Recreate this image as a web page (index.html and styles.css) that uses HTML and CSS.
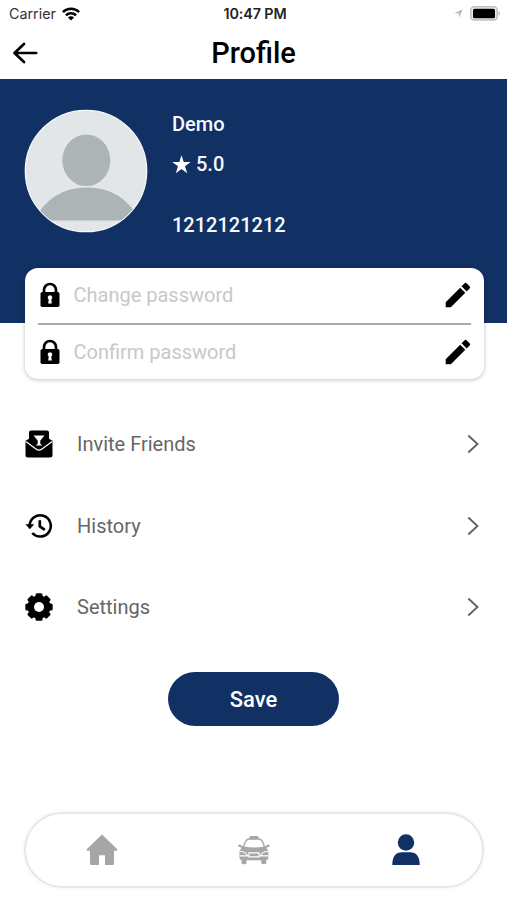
FILE: index.html
```html
<!DOCTYPE html>
<html lang="en">
<head>
<meta charset="utf-8">
<title>Profile</title>
<link rel="stylesheet" href="styles.css">
</head>
<body>
<svg width="0" height="0" class="defs" aria-hidden="true">
  <symbol id="lock" viewBox="0 0 20 26"><path d="M4 11V8a6 6 0 0 1 12 0v3" fill="none" stroke="#000" stroke-width="2.7"/><rect x=".5" y="10" width="19" height="15" rx="1.8"/><path fill="#fff" d="M10 13.2a2.3 2.3 0 0 1 1.3 4.2l.5 4.1H8.2l.5-4.1a2.3 2.3 0 0 1 1.3-4.2z"/></symbol>
  <symbol id="pencil" viewBox="0 0 26 26"><path d="M.7 20.2 15.2 5.7l5.1 5.1L5.8 25.3H.7zM16.6 4.3l2.8-2.9q1.2-1.1 2.4 0l2.8 2.8q1.1 1.2 0 2.4l-2.9 2.8z"/></symbol>
  <symbol id="chevron" viewBox="0 0 12 20"><path d="m1.3 1.5 9.2 8.5-9.2 8.5" fill="none" stroke="#606060" stroke-width="1.8"/></symbol>
</svg>
<div class="status">
  <div class="carrier"><span>Carrier</span>
    <svg width="18" height="14" viewBox="0 0 18 14"><g fill="none" stroke="#000" stroke-width="2.4"><path d="M.9 5.1a11.5 11.5 0 0 1 16.2 0"/><path d="M3.9 8.3a7.2 7.2 0 0 1 10.2 0"/></g><path d="M9 13.6 5.9 10.5a4.4 4.4 0 0 1 6.2 0z"/></svg>
  </div>
  <div class="time">10:47 PM</div>
  <div class="indicators">
    <svg width="9" height="9" viewBox="0 0 9 9"><path fill="#b5b5b5" d="M8.7.3 4.9 8.7V4.3H.3z"/></svg>
    <svg width="31" height="15" viewBox="0 0 31 15"><rect x=".8" y=".8" width="26.4" height="13.2" rx="3.5" fill="#eee" stroke="#bdbdbd" stroke-width="1.5"/><rect x="3" y="2.7" width="22" height="9.5" rx="1.5"/><path fill="#b5b5b5" d="M28.6 5q3 2.4 0 4.8z"/></svg>
  </div>
</div>
<header class="header">
  <svg width="26" height="22" viewBox="0 0 26 22"><path d="M12 2 2.5 11l9.5 9M2.8 11h21.4" fill="none" stroke="#000" stroke-width="2.7" stroke-linecap="round" stroke-linejoin="round"/></svg>
  <h1>Profile</h1>
</header>
<section class="hero">
  <svg class="avatar" width="124" height="124" viewBox="0 0 124 124"><defs><clipPath id="round"><circle cx="62" cy="62" r="60.5"/></clipPath></defs><circle cx="62" cy="62" r="60.7" fill="#e3e6e7" stroke="#f5f8fc" stroke-width="1.3"/><g clip-path="url(#round)" fill="#adb4b6"><ellipse cx="62.3" cy="51.3" rx="24" ry="25.8"/><path d="M10 111.5Q27 78.5 63 78.5T116 111.5z"/></g></svg>
  <div class="info">
    <div class="name">Demo</div>
    <div class="rating"><svg width="19" height="19" viewBox="0 0 19 19"><path fill="#fff" d="m9.5.3 2.2 6.8h7l-5.7 4.2 2.2 6.9-5.7-4.2-5.7 4.2L6 11.3.3 7.1h7z"/></svg><span>5.0</span></div>
    <div class="phone">1212121212</div>
  </div>
</section>
<section class="card">
  <div class="field"><svg class="lock"><use href="#lock"/></svg><span class="change">Change password</span><svg class="pencil"><use href="#pencil"/></svg></div>
  <div class="divider"></div>
  <div class="field"><svg class="lock"><use href="#lock"/></svg><span class="confirm">Confirm password</span><svg class="pencil"><use href="#pencil"/></svg></div>
</section>
<nav class="menu">
  <div class="item">
    <svg width="28" height="28" viewBox="0 0 28 28"><path d="M4 8.7V2.5Q4 .5 6 .5h16q2 0 2 2v6.2l3.5 2V25q0 2.5-2.5 2.5H3Q.5 27.500.5 25V10.700z"/><path d="m.8 11.500 10.200 7.500q3 2.200 6 0l10.200-7.500" fill="none" stroke="#fff" stroke-width="1.200"/><path fill="#fff" d="M8.500 5.500h11L15.300 10.500v3.200l2 1.800h-6.600l2-1.800v-3.200z"/></svg>
    <span class="invite">Invite Friends</span><svg class="chevron"><use href="#chevron"/></svg>
  </div>
  <div class="item">
    <svg width="28" height="26" viewBox="0 0 28 26"><path d="M4.600 12.500A10.600 10.600 0 1 1 7.300 20" fill="none" stroke="#000" stroke-width="2.600"/><path d="M.5 11.300h8.700l-4.400 4.900z"/><path d="M14.800 7.300v6l5 3.500" fill="none" stroke="#000" stroke-width="2.700"/></svg>
    <span class="history">History</span><svg class="chevron"><use href="#chevron"/></svg>
  </div>
  <div class="item">
    <svg width="28" height="28" viewBox="0 0 28 28"><g id="gear"><rect x="10.500" y=".3" width="7" height="27.400" rx="1.500"/><rect x="10.500" y=".3" width="7" height="27.400" rx="1.500" transform="rotate(45 14 14)"/><rect x="10.500" y=".3" width="7" height="27.400" rx="1.500" transform="rotate(90 14 14)"/><rect x="10.500" y=".3" width="7" height="27.400" rx="1.500" transform="rotate(135 14 14)"/><circle cx="14" cy="14" r="11.500"/></g><circle cx="14" cy="14" r="5" fill="#fff"/></svg>
    <span class="settings">Settings</span><svg class="chevron"><use href="#chevron"/></svg>
  </div>
</nav>
<button class="save">Save</button>
<nav class="tabs">
  <div><svg width="32" height="32" viewBox="0 0 32 32"><path fill="#a6a6a6" d="M16 .5 31.300 15.200q.6 1.500-1 1.500H28V29.500q0 1.500-1.500 1.500H19V21.200h-6V31H5.500Q4 31 4 29.500V16.700H1.700q-1.600 0-1-1.500z"/></svg></div>
  <div><svg width="32" height="30" viewBox="0 0 32 30"><g fill="#a6a6a6"><path d="M11 4 12 1h8l1 3z"/><path fill="none" stroke="#a6a6a6" stroke-width="1.300" d="M5.300 12.500Q7.500 4 11 4h10q3.500 0 5.700 8.500"/><path d="M5.500 11.500q10.500 2 21 0l4-2q1.500.2 1.300 2l-3.500 1.200 2 3.500v7q0 1.500-1.500 1.500h-.5v3q0 1.600-2.500 1.600t-2.500-1.600v-2.500H8.500v2.500q0 1.600-2.500 1.600t-2.500-1.600v-3H3q-1.500 0-1.500-1.500v-7l2-3.500L.2 11.500q-.2-1.800 1.300-2z"/></g><path d="M2 16.500q6 .2 7.500 4.300H2M30 16.500q-6 .2-7.500 4.300H30M11 17.800h10v4H11z" fill="none" stroke="#fff" stroke-width="1.200"/></svg></div>
  <div><svg width="30" height="32" viewBox="0 0 30 32"><g fill="#113064"><circle cx="15" cy="8.500" r="8.200"/><path d="M1.300 31Q1.300 18.300 11 18.300h8q9.700 0 9.700 12.700z"/></g></svg></div>
</nav>
</body>
</html>
```
FILE: styles.css
```css
* { box-sizing: border-box; }
body { margin: 0; width: 507px; height: 900px; overflow: hidden; background: #fff; font-family: Roboto, sans-serif; font-size: 20px; color: #000; }
svg { display: block; flex: none; }
.defs { position: absolute; }
.status { height: 27px; display: grid; grid-template-columns: 1fr auto 1fr; align-items: center; padding: 0 6px 0 9px; font: 14.3px Inter, sans-serif; }
.carrier { display: flex; align-items: center; gap: 6px; color: #333; }
.time { font-weight: 600; letter-spacing: -.1px; color: #222; }
.indicators { display: flex; justify-content: flex-end; align-items: center; gap: 7px; }
.header { height: 52px; display: grid; grid-template-columns: 26px 1fr 26px; align-items: center; padding: 0 12px; }
.header h1 { margin: 0; text-align: center; font-size: 29px; font-weight: 500; line-height: 52px; }
.hero { height: 244px; background: #113064; display: flex; padding: 30px 24px; gap: 24px; }
.info { color: #f7f9fc; font-weight: 500; line-height: 30px; }
.rating { display: flex; align-items: center; gap: 5px; margin-top: 10px; }
.phone { margin-top: 31px; }
.card { position: relative; width: 459px; height: 111px; margin: -55px 0 0 24.500px; padding: 0 13px; border-radius: 13px; background: #fff; box-shadow: 0 1px 4px rgba(0,0,0,.25); }
.field { height: 54.500px; display: flex; align-items: center; color: #c8c8c8; }
.field span { flex: 1; margin-left: 14px; }
.lock { width: 20px; height: 26px; margin-left: 2px; }
.pencil { width: 26px; height: 26px; }
.divider { height: 2px; background: #aaa; }
.menu { margin-top: 24px; padding: 0 28px 0 25px; }
.item { height: 81.700px; display: flex; align-items: center; color: #666; }
.item span { flex: 1; margin-left: 24px; }
.chevron { width: 12px; height: 20px; }
.save { display: block; width: 171px; height: 54px; margin: 24px auto 0; padding: 0; border: 0; border-radius: 27px; background: #113064; color: #fff; font: 500 22px Roboto, sans-serif; }
.tabs { width: 460px; height: 76px; margin: 86px 0 0 24px; border: 2px solid #e7e7e7; border-radius: 38px; display: grid; grid-template-columns: repeat(3, 1fr); place-items: center; box-shadow: 0 0 4px rgba(0,0,0,.06); }
```
